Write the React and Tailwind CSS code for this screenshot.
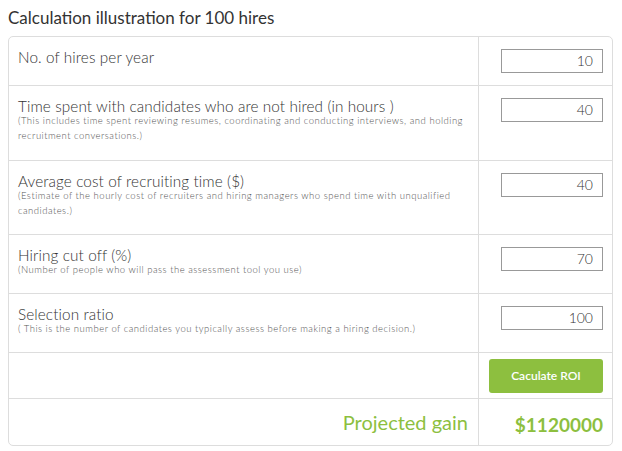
import React from 'react';

const rows = [
  { label: 'No. of hires per year', value: '10', h: 'h-[49px]' },
  {
    label: 'Time spent with candidates who are not hired (in hours )',
    note: '(This includes time spent reviewing resumes, coordinating and conducting interviews, and holding recruitment conversations.)',
    value: '40',
    h: 'h-[75px]',
  },
  {
    label: 'Average cost of recruiting time ($)',
    note: '(Estimate of the hourly cost of recruiters and hiring managers who spend time with unqualified candidates.)',
    value: '40',
    h: 'h-[74px]',
  },
  {
    label: 'Hiring cut off (%)',
    note: '(Number of people who will pass the assessment tool you use)',
    value: '70',
    h: 'h-[59px]',
  },
  {
    label: 'Selection ratio',
    note: '( This is the number of candidates you typically assess before making a hiring decision.)',
    value: '100',
    h: 'h-[59px]',
  },
];

export default function App() {
  return (
    <div className="w-[622px] h-[451px] bg-white px-2 pt-[7px] font-['Lato',sans-serif] text-[#333]">
      <h2 className="text-[17px] leading-[22px] text-[#333] mb-[7px]">Calculation illustration for 100 hires</h2>
      <div className="w-[605px] border border-[#ddd] rounded-[5px]">
        {rows.map((r, i) => (
          <div key={i} className={`flex ${r.h} border-b border-[#ddd]`}>
            <div className="flex-1 pl-[9px] pr-2 pt-[10px]">
              <div className="text-[15.3px] leading-[20px] font-light tracking-[0.1px] text-[#333]">{r.label}</div>
              {r.note && (
                <div className="text-[9.5px] leading-[15px] text-[#555] font-light tracking-[0.5px] mt-[-3px]">
                  {r.note}
                </div>
              )}
            </div>
            <div className="w-[134px] border-l border-[#ddd] pt-[12px] pl-[22px] pr-[9px]">
              <div className="h-[24px] border border-[#999] text-right pr-[9px] text-[14px] leading-[22px] font-light text-[#333]">
                {r.value}
              </div>
            </div>
          </div>
        ))}
        <div className="flex h-[46px] border-b border-[#ddd]">
          <div className="flex-1" />
          <div className="w-[134px] border-l border-[#ddd] pt-[6px] pl-[10px] pr-[9px]">
            <button className="w-full h-[34px] rounded-[3px] bg-[#8dbf3f] text-white text-[12px] font-semibold">
              Caculate ROI
            </button>
          </div>
        </div>
        <div className="flex h-[46px]">
          <div className="flex-1 text-right pr-[10px] pt-[8px] text-[20px] text-[#8dbf3f]">Projected gain</div>
          <div className="w-[134px] border-l border-[#ddd] text-right pr-[9px] pt-[12px] text-[19px] font-bold text-[#8dbf3f]">
            $1120000
          </div>
        </div>
      </div>
    </div>
  );
}
